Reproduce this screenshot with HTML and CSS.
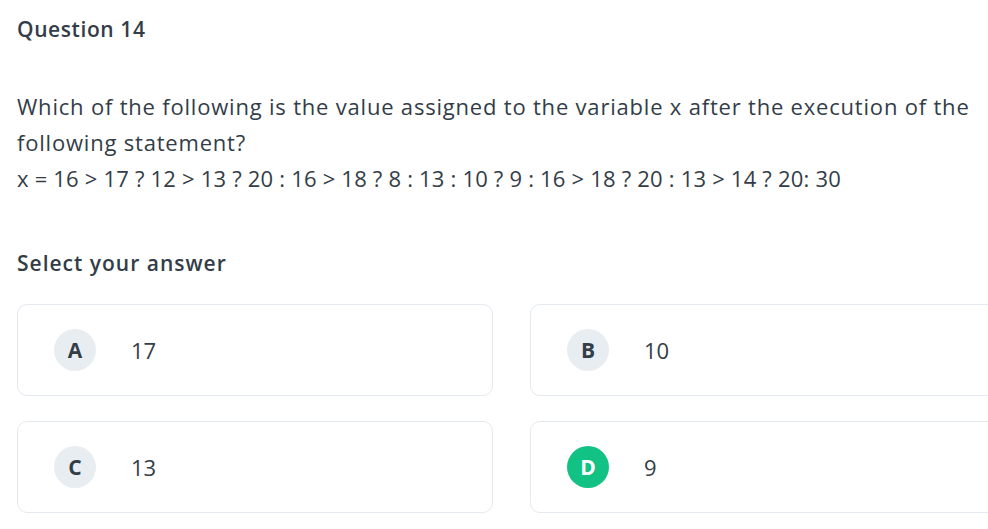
FILE: index.html
```html
<!DOCTYPE html>
<html>
<head>
<meta charset="utf-8">
<link rel="stylesheet" href="styles.css">
</head>
<body>
<div class="page">
  <h2 class="title">Question 14</h2>
  <div class="question">
    <p class="prose">Which of the following is the value assigned to the variable x after the execution of the following statement?</p>
    <p class="code">x = 16 &gt; 17 ? 12 &gt; 13 ? 20 : 16 &gt; 18 ? 8 : 13 : 10 ? 9 : 16 &gt; 18 ? 20 : 13 &gt; 14 ? 20: 30</p>
  </div>
  <h3 class="subtitle">Select your answer</h3>
  <div class="answers">
    <div class="card"><span class="badge">A</span><span class="val">17</span></div>
    <div class="card"><span class="badge">B</span><span class="val">10</span></div>
    <div class="card"><span class="badge">C</span><span class="val">13</span></div>
    <div class="card"><span class="badge correct">D</span><span class="val">9</span></div>
  </div>
</div>
</body>
</html>
```

FILE: styles.css
```css
html, body {
  margin: 0;
  padding: 0;
  background: #fff;
  overflow: hidden;
}
body {
  font-family: "Open Sans", "Lato", sans-serif;
  color: #333d48;
}
.page {
  padding: 0 17px;
  width: 1100px;
}
.title {
  margin: 0;
  padding-top: 14px;
  font-size: 21px;
  line-height: 30px;
  font-weight: 600;
  letter-spacing: 0.6px;
}
.question {
  margin-top: 44px;
  width: 975px;
  font-size: 22px;
  line-height: 36px;
}
.question p {
  margin: 0;
}
.prose {
  letter-spacing: 0.8px;
}
.code {
  letter-spacing: 0.2px;
}
.subtitle {
  margin: 0;
  margin-top: 52px;
  font-size: 21px;
  line-height: 30px;
  font-weight: 600;
  letter-spacing: 1px;
}
.answers {
  margin-top: 26px;
  display: grid;
  grid-template-columns: 476px 476px;
  column-gap: 37px;
  row-gap: 25px;
}
.card {
  box-sizing: border-box;
  height: 92px;
  border: 1px solid #e4e9ef;
  border-radius: 10px;
  display: flex;
  align-items: center;
  padding-left: 36px;
}
.badge {
  width: 42px;
  height: 42px;
  border-radius: 50%;
  background: #e8edf2;
  display: flex;
  align-items: center;
  justify-content: center;
  font-weight: 700;
  font-size: 21px;
  color: #333d48;
}
.badge.correct {
  background: #12c284;
  color: #fff;
}
.val {
  margin-left: 35px;
  font-size: 22px;
}
```
